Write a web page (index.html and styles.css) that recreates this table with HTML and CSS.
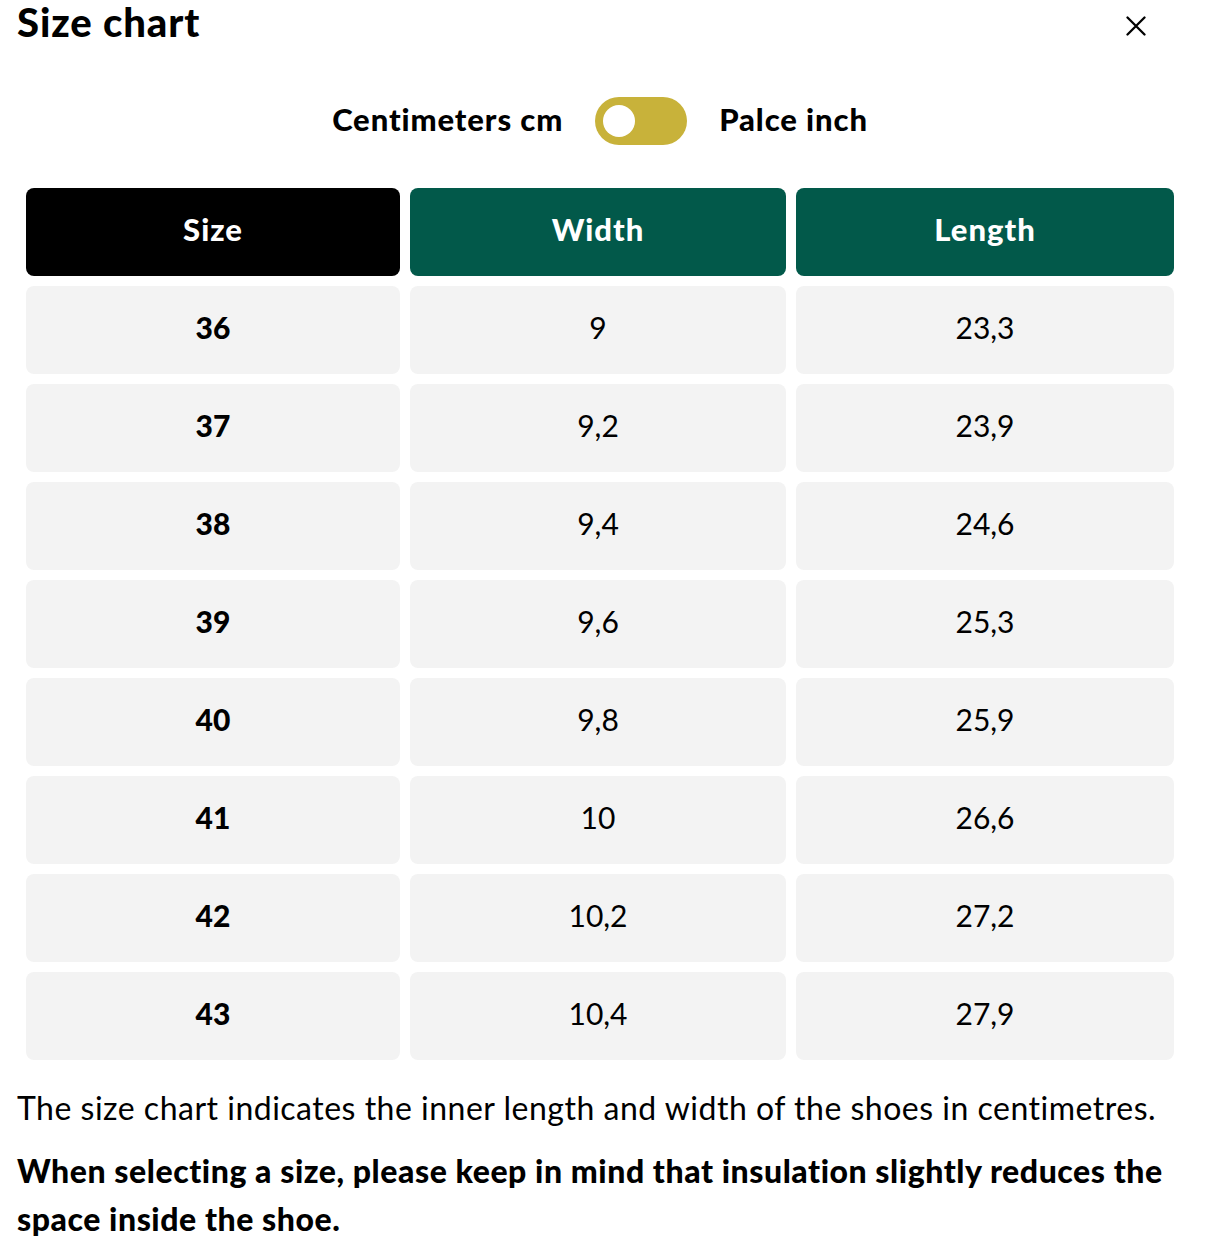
FILE: index.html
```html
<!DOCTYPE html>
<html>
<head>
<meta charset="utf-8">
<link rel="stylesheet" href="styles.css">
</head>
<body>
<div class="modal">
  <div class="head">
    <h1 class="title">Size chart</h1>
    <button class="close" aria-label="Close">
      <svg width="20" height="20" viewBox="0 0 20 20"><path d="M1.5 1.5L18.5 18.5M18.5 1.5L1.5 18.5" stroke="#000" stroke-width="2.3" stroke-linecap="round"/></svg>
    </button>
  </div>
  <div class="units">
    <span class="unit">Centimeters cm</span>
    <span class="toggle"><span class="knob"></span></span>
    <span class="unit">Palce inch</span>
  </div>
  <div class="table">
    <div class="th th-size">Size</div>
    <div class="th">Width</div>
    <div class="th">Length</div>

    <div class="td b">36</div><div class="td">9</div><div class="td">23,3</div>
    <div class="td b">37</div><div class="td">9,2</div><div class="td">23,9</div>
    <div class="td b">38</div><div class="td">9,4</div><div class="td">24,6</div>
    <div class="td b">39</div><div class="td">9,6</div><div class="td">25,3</div>
    <div class="td b">40</div><div class="td">9,8</div><div class="td">25,9</div>
    <div class="td b">41</div><div class="td">10</div><div class="td">26,6</div>
    <div class="td b">42</div><div class="td">10,2</div><div class="td">27,2</div>
    <div class="td b">43</div><div class="td">10,4</div><div class="td">27,9</div>
  </div>
  <p class="note">The size chart indicates the inner length and width of the shoes in centimetres.</p>
  <p class="note strong">When selecting a size, please keep in mind that insulation slightly reduces the space inside the shoe.</p>
</div>
</body>
</html>
```

FILE: styles.css
```css
* { box-sizing: border-box; }
html, body { margin: 0; padding: 0; background: #fff; }
body {
  font-family: "Lato", "Noto Sans", sans-serif;
  color: #000;
}
.modal {
  padding: 0 30px 0 17px;
  width: 1208px;
}
.head {
  display: flex;
  justify-content: space-between;
  align-items: flex-start;
}
.title {
  margin: 0;
  font-size: 40px;
  font-weight: 900;
  line-height: 44px;
  letter-spacing: 0.9px;
}
.close {
  border: 0;
  background: none;
  padding: 0;
  margin: 16px 32px 0 0;
  width: 20px;
  height: 20px;
  display: flex;
}
.units {
  display: flex;
  justify-content: center;
  align-items: center;
  gap: 32px;
  margin: 53px 4px 0 9px;
  height: 48px;
}
.unit {
  font-size: 31px;
  font-weight: 900;
  letter-spacing: 0.9px;
  padding-bottom: 5px;
}
.toggle {
  width: 92px;
  height: 48px;
  border-radius: 24px;
  background: #C8B23A;
  display: flex;
  align-items: center;
  padding-left: 8px;
}
.knob {
  width: 32px;
  height: 32px;
  border-radius: 50%;
  background: #fff;
}
.table {
  margin: 43px 0 0 9px;
  display: grid;
  grid-template-columns: 374px 376px 378px;
  grid-auto-rows: 88px;
  gap: 10px;
}
.th, .td {
  display: flex;
  align-items: center;
  justify-content: center;
  border-radius: 8px;
  font-size: 30px;
  padding-bottom: 7px;
}
.th {
  background: #02594A;
  color: #fff;
  font-weight: 900;
  font-size: 31px;
  letter-spacing: 1px;
}
.th-size { background: #000; }
.td {
  background: #F3F3F3;
  font-weight: 400;
}
.td.b { font-weight: 900; }
.note {
  margin: 24px 0 0;
  font-size: 32px;
  line-height: 48px;
  font-weight: 400;
  letter-spacing: 0.5px;
}
.strong {
  margin-top: 15px;
  font-weight: 900;
  letter-spacing: 0.55px;
}
```
